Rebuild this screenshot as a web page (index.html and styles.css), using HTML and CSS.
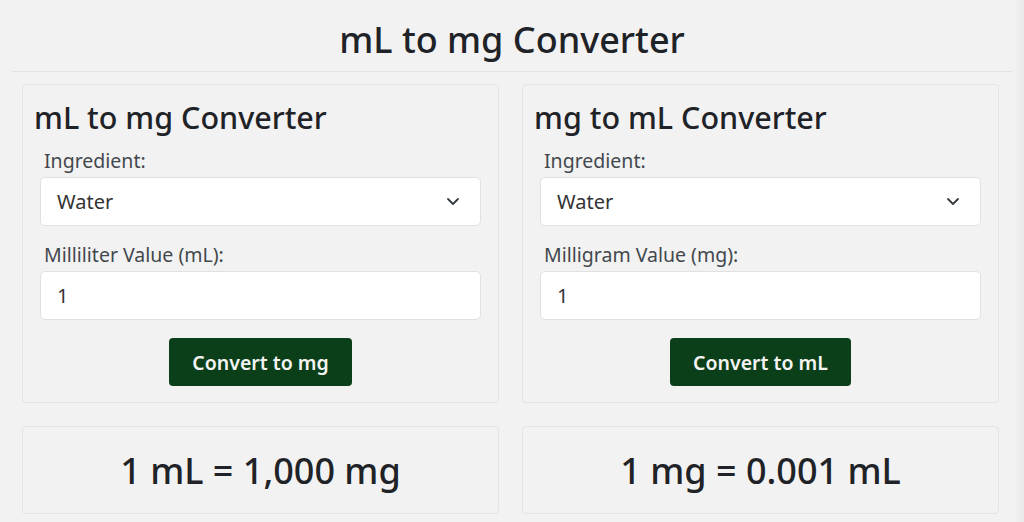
FILE: index.html
```html
<!DOCTYPE html>
<html lang="en">
<head>
<meta charset="utf-8">
<title>mL to mg Converter</title>
<link rel="stylesheet" href="styles.css">
</head>
<body>
<div class="page">
  <main class="main">
    <h1 class="title">mL to mg Converter</h1>
    <hr class="rule">
    <div class="grid">
      <section class="card">
        <h2 class="card-title">mL to mg Converter</h2>
        <div class="field">
          <label class="label">Ingredient:</label>
          <div class="select"><span>Water</span>
            <svg class="chev" width="14" height="9" viewBox="0 0 14 9"><path d="M2 2l5 5 5-5" fill="none" stroke="#343a40" stroke-width="1.8" stroke-linecap="round" stroke-linejoin="round"/></svg>
          </div>
        </div>
        <div class="field">
          <label class="label">Milliliter Value (mL):</label>
          <input class="input" type="text" value="1">
        </div>
        <div class="actions"><button class="btn">Convert to mg</button></div>
      </section>
      <section class="card">
        <h2 class="card-title">mg to mL Converter</h2>
        <div class="field">
          <label class="label">Ingredient:</label>
          <div class="select"><span>Water</span>
            <svg class="chev" width="14" height="9" viewBox="0 0 14 9"><path d="M2 2l5 5 5-5" fill="none" stroke="#343a40" stroke-width="1.8" stroke-linecap="round" stroke-linejoin="round"/></svg>
          </div>
        </div>
        <div class="field">
          <label class="label">Milligram Value (mg):</label>
          <input class="input" type="text" value="1">
        </div>
        <div class="actions"><button class="btn">Convert to mL</button></div>
      </section>
    </div>
    <div class="grid results">
      <section class="card result">1 mL = 1,000 mg</section>
      <section class="card result">1 mg = 0.001 mL</section>
    </div>
  </main>
  <div class="scroll"></div>
</div>
</body>
</html>
```

FILE: styles.css
```css
html, body {
  margin: 0;
  padding: 0;
  background: #f2f2f2;
}
body {
  font-family: "Noto Sans", "Open Sans", sans-serif;
  color: #212529;
}
.page {
  display: flex;
  height: 522px;
  overflow: hidden;
}
.main {
  flex: 1;
  padding: 0 2px 0 12px;
}
.scroll {
  width: 10px;
  background: linear-gradient(to right, #f2f2f2, #e9e9ea);
}
.title {
  margin: 0;
  padding-top: 20px;
  font-size: 36px;
  line-height: 40px;
  font-weight: 500;
  text-align: center;
  color: #1f2327;
}
.rule {
  margin: 11px 0 0;
  border: 0;
  border-top: 1px solid #e2e2e2;
}
.grid {
  display: grid;
  grid-template-columns: 477px 477px;
  column-gap: 23px;
  margin: 12px 0 0 10px;
}
.card {
  background: #f2f2f2;
  border: 1px solid #e4e4e4;
  border-radius: 4px;
  padding: 15px 17px 16px;
}
.card-title {
  margin: 0 0 15px -6px;
  font-size: 30.5px;
  line-height: 34px;
  font-weight: 500;
  color: #1f2327;
}
.field + .field {
  margin-top: 17px;
}
.label {
  display: block;
  padding-left: 4px;
  margin-bottom: 4px;
  font-size: 19.5px;
  line-height: 24px;
  color: #43484d;
}
.select, .input {
  box-sizing: border-box;
  width: 100%;
  height: 49px;
  background: #fff;
  border: 1px solid #e1e1e1;
  border-radius: 5px;
  font-family: inherit;
  font-size: 20px;
  color: #333;
  padding: 0 16px;
}
.select {
  display: flex;
  align-items: center;
  justify-content: space-between;
  padding-right: 20px;
}
.input {
  outline: none;
  display: block;
}
.actions {
  display: flex;
  justify-content: center;
  margin-top: 18px;
}
.btn {
  height: 48px;
  padding: 0 23px;
  background: #0b3f19;
  color: #f4f4f4;
  border: 0;
  border-radius: 4px;
  font-family: inherit;
  font-size: 19.5px;
  font-weight: 600;
}
.results {
  margin-top: 23px;
}
.result {
  height: 88px;
  box-sizing: border-box;
  padding: 0;
  display: flex;
  align-items: center;
  justify-content: center;
  font-size: 36px;
  font-weight: 500;
  color: #1f2327;
}
```
